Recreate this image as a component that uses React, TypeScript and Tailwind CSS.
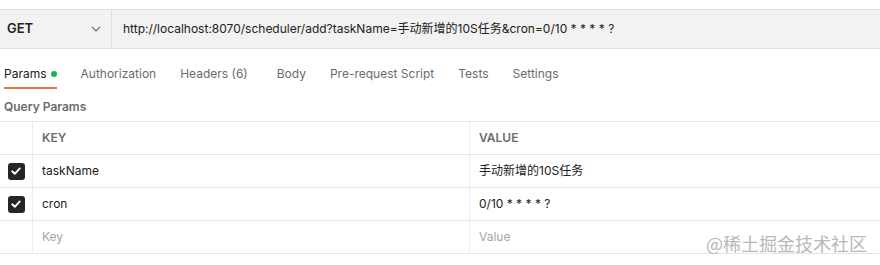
import React from "react";

const font = { fontFamily: 'Inter, "Open Sans", "Noto Sans CJK SC", sans-serif' };

function Check() {
  return (
    <div className="w-[17px] h-[17px] rounded-[3px] bg-[#262626] flex items-center justify-center">
      <svg width="12" height="12" viewBox="0 0 12 12">
        <path d="M2.2 6.3 L4.8 8.8 L9.8 3.4" fill="none" stroke="white" strokeWidth="1.9" strokeLinecap="round" strokeLinejoin="round" />
      </svg>
    </div>
  );
}

function Row({ k, v, checked, placeholder }: { k: string; v: string; checked?: boolean; placeholder?: boolean }) {
  const tc = placeholder ? "text-[#a6a6a6]" : "text-[#212121]";
  return (
    <div className="flex h-[33px] border-b border-[#e6e6e6]">
      <div className="w-[33px] shrink-0 border-r border-[#ededed] flex items-center justify-center">
        {checked && <Check />}
      </div>
      <div className={`w-[437px] shrink-0 border-r border-[#ededed] flex items-center pl-[9px] text-[12px] ${tc}`}>{k}</div>
      <div className={`flex-1 flex items-center pl-[9px] text-[12px] ${tc}`}>{v}</div>
    </div>
  );
}

export default function App() {
  const tabs = [
    { t: "Authorization", c: "" },
    { t: "Headers (6)", c: "mr-[5px]" },
    { t: "Body", c: "" },
    { t: "Pre-request Script", c: "" },
    { t: "Tests", c: "" },
    { t: "Settings", c: "" },
  ];
  return (
    <div className="w-[880px] h-[265px] bg-white relative overflow-hidden" style={font}>
      <div className="h-[9px] bg-white" />
      <div className="h-[40px] flex border-y border-[#e0e0e0] bg-[#f2f2f2]">
        <div className="w-[112px] shrink-0 flex items-center justify-between pl-[7px] pr-[10px] border-r border-[#e0e0e0]">
          <span className="text-[13px] font-semibold text-[#212121]">GET</span>
          <svg width="10" height="6" viewBox="0 0 10 6">
            <path d="M1 1 L5 5 L9 1" fill="none" stroke="#6b6b6b" strokeWidth="1.1" />
          </svg>
        </div>
        <div className="flex-1 flex items-center pl-[11px] text-[12px] text-[#212121]">
          http://localhost:8070/scheduler/add?taskName=手动新增的10S任务&amp;cron=0/10 * * * * ?
        </div>
      </div>
      <div className="flex items-end h-[40px] pl-[4px] gap-[24px] text-[12px] text-[#6b6b6b]">
        <div className="flex flex-col">
          <div className="flex items-center gap-[4px] text-[#212121] pb-[4px]">
            Params <span className="w-[6px] h-[6px] rounded-full bg-[#0cbb52] inline-block" />
          </div>
          <div className="h-[2px] bg-[#e57746]" />
        </div>
        {tabs.map((t) => (
          <div key={t.t} className={`pb-[6px] ${t.c}`}>{t.t}</div>
        ))}
      </div>
      <div className="h-[32px] flex items-center pl-[4px] pt-[3px] text-[12px] font-semibold text-[#6b6b6b]">Query Params</div>
      <div className="border-t border-[#e6e6e6]">
        <div className="flex h-[33px] border-b border-[#e6e6e6]">
          <div className="w-[33px] shrink-0 border-r border-[#ededed]" />
          <div className="w-[437px] shrink-0 border-r border-[#ededed] flex items-center pl-[9px] text-[12px] font-semibold text-[#6b6b6b]">KEY</div>
          <div className="flex-1 flex items-center pl-[9px] text-[12px] font-semibold text-[#6b6b6b]">VALUE</div>
        </div>
        <Row k="taskName" v="手动新增的10S任务" checked />
        <Row k="cron" v="0/10 * * * * ?" checked />
        <Row k="Key" v="Value" placeholder />
      </div>
      <div className="absolute left-[706px] top-[230px] text-[18px] text-[#b8b8b8]" style={{ fontFamily: '"Noto Sans CJK SC", sans-serif' }}>
        @稀土掘金技术社区
      </div>
    </div>
  );
}
